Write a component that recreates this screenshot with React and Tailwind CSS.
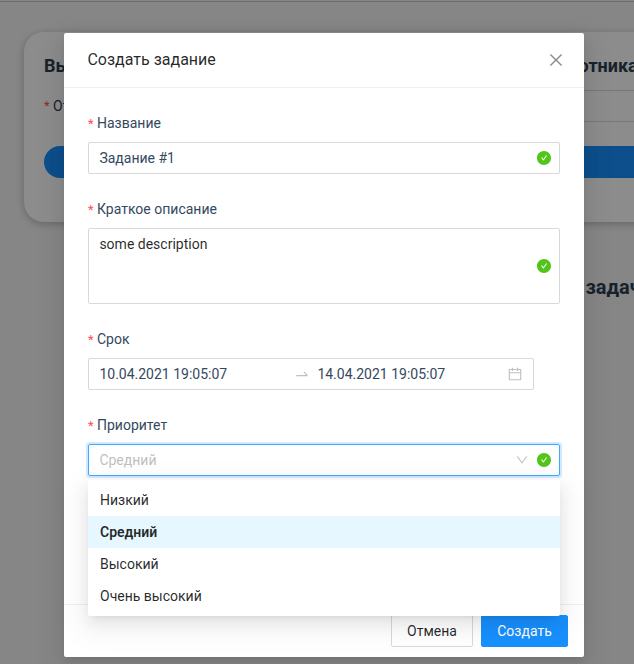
import React from 'react';
import {
  AiFillCheckCircle,
  AiOutlineCalendar,
  AiOutlineClose,
  AiOutlineDown,
  AiOutlineSwapRight,
} from 'react-icons/ai';

const OPTIONS = ['Низкий', 'Средний', 'Высокий', 'Очень высокий'];

function Field({ label, children }) {
  return (
    <div className="mb-6">
      <div className="mb-2 flex h-[22px] items-center text-[#34495e]">
        <span className="mr-[3.5px] w-[5.5px] text-[13px] leading-none text-[#ff4d4f]">*</span>
        <span>{label}</span>
      </div>
      {children}
    </div>
  );
}

function Valid() {
  return <AiFillCheckCircle className="size-4 shrink-0 text-[#52c41a]" />;
}

function Backdrop() {
  return (
    <div className="h-full w-[900px] pt-px">
      <div className="h-px bg-[#c4c4c4]" />
      <div className="ml-6 mt-[30px] h-[190px] rounded-[20px] bg-white pl-5 pt-5 shadow-[0_2px_8px_rgba(0,0,0,0.25)]">
        <div className="flex h-7 items-center text-lg font-bold">
          <span className="w-[534.5px]">Вы</span>
          <span>отника</span>
        </div>
        <div className="mt-[10px] flex h-8 items-center">
          <span className="mr-[3.5px] w-[5.5px] text-[13px] text-[#ff4d4f]">*</span>
          <span className="w-[400px]">Ответственный</span>
          <span className="h-8 flex-1 border border-[#d9d9d9] bg-white" />
        </div>
        <div className="mt-6 h-8 rounded-l-full bg-[#1890ff]" />
      </div>
      <div className="mt-[51px] pl-[585.5px] text-xl font-bold leading-7">задачи</div>
    </div>
  );
}

function Dropdown() {
  return (
    <div className="absolute left-0 top-9 z-10 w-full rounded-[2px] bg-white py-1 text-black/85 shadow-[0_3px_6px_-4px_rgba(0,0,0,0.12),0_6px_16px_0_rgba(0,0,0,0.08),0_9px_28px_8px_rgba(0,0,0,0.05)]">
      {OPTIONS.map((option) => (
        <div
          key={option}
          className={
            option === 'Средний'
              ? 'h-8 bg-[#e6f7ff] px-3 py-[5px] font-semibold'
              : 'h-8 px-3 py-[5px]'
          }
        >
          {option}
        </div>
      ))}
    </div>
  );
}

function Modal() {
  return (
    <div className="flex h-[624px] w-[520px] flex-col rounded-[2px] bg-white shadow-[0_3px_6px_-4px_rgba(0,0,0,0.12),0_6px_16px_0_rgba(0,0,0,0.08),0_9px_28px_8px_rgba(0,0,0,0.05)]">
      <div className="flex h-[55px] shrink-0 items-center justify-between border-b border-[#f0f0f0] pl-[23.4px] pr-[19px]">
        <h2 className="text-base font-normal leading-[22px] text-black/85">Создать задание</h2>
        <AiOutlineClose className="size-[18px] text-black/45" />
      </div>
      <div className="flex-1 p-6">
        <Field label="Название">
          <div className="flex h-8 items-center justify-between rounded-[2px] border border-[#d9d9d9] pl-[10.4px] pr-[7px] text-[#34495e]">
            <span>Задание #1</span>
            <Valid />
          </div>
        </Field>
        <Field label="Краткое описание">
          <div className="flex h-[76px] items-center justify-between rounded-[2px] border border-[#d9d9d9] pl-[10.4px] pr-[7px]">
            <span className="self-start pt-1 text-black/85">some description</span>
            <Valid />
          </div>
        </Field>
        <Field label="Срок">
          <div className="flex h-8 w-[446px] items-center rounded-[2px] border border-[#d9d9d9] pl-[10.4px] pr-[10px] text-[#34495e]">
            <span className="w-[194.6px]">10.04.2021 19:05:07</span>
            <AiOutlineSwapRight className="mr-[7.4px] size-4 text-black/25" />
            <span className="flex-1">14.04.2021 19:05:07</span>
            <AiOutlineCalendar className="size-4 text-black/25" />
          </div>
        </Field>
        <Field label="Приоритет">
          <div className="relative">
            <div className="flex h-8 items-center rounded-[2px] border border-[#40a9ff] pl-[10.4px] pr-[7px] shadow-[0_0_0_2px_rgba(24,144,255,0.2)]">
              <span className="flex-1 text-[#bfbfbf]">Средний</span>
              <AiOutlineDown className="mr-[7px] size-3.5 text-black/25" />
              <Valid />
            </div>
            <Dropdown />
          </div>
        </Field>
      </div>
      <div className="flex h-[53px] shrink-0 justify-end gap-2 border-t border-[#f0f0f0] px-4 py-[10px]">
        <button className="h-8 w-[82px] rounded-[2px] border border-[#d9d9d9] bg-white text-black/85">
          Отмена
        </button>
        <button className="h-8 w-[87px] rounded-[2px] border border-[#1890ff] bg-[#1890ff] text-white">
          Создать
        </button>
      </div>
    </div>
  );
}

export default function App() {
  return (
    <div className="relative h-[664px] w-[634px] overflow-hidden bg-[#f5f5f5] font-[Roboto,sans-serif] text-sm leading-[22px] text-[#2c3e50]">
      <Backdrop />
      <div className="absolute inset-0 bg-black/45 pl-16 pt-[33px]">
        <Modal />
      </div>
    </div>
  );
}
